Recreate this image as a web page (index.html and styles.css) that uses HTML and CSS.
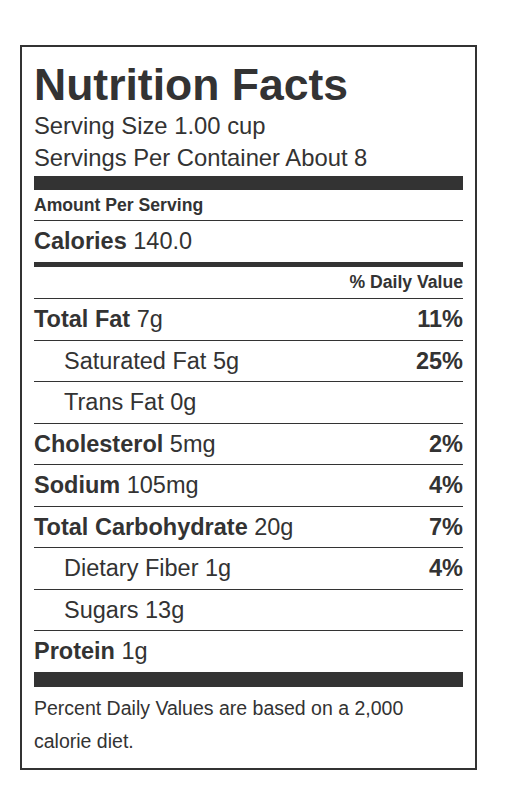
FILE: index.html
```html
<!DOCTYPE html>
<html lang="en">
<head>
    <meta charset="UTF-8">
    <meta name="viewport" content="width=device-width, initial-scale=1.0">
    <title>Nutrition Facts</title>
    <link rel="stylesheet" href="styles.css">
</head>
<body>
    <section class="label">
        <h1 class="title">Nutrition Facts</h1>
        <p class="serving">Serving Size 1.00 cup</p>
        <p class="serving">Servings Per Container About 8</p>
        <div class="bar bar-lg"></div>

        <div class="row row-small">
            <b>Amount Per Serving</b>
        </div>
        <div class="row row-cal">
            <span><b>Calories</b> 140.0</span>
        </div>
        <div class="bar bar-md"></div>
        <div class="row row-small row-dv">
            <b>% Daily Value</b>
        </div>

        <ul class="facts">
            <li class="row">
                <span><b>Total Fat</b> 7g</span>
                <b>11%</b>
            </li>
            <li class="row sub">
                <span>Saturated Fat 5g</span>
                <b>25%</b>
            </li>
            <li class="row sub">
                <span>Trans Fat 0g</span>
            </li>
            <li class="row">
                <span><b>Cholesterol</b> 5mg</span>
                <b>2%</b>
            </li>
            <li class="row">
                <span><b>Sodium</b> 105mg</span>
                <b>4%</b>
            </li>
            <li class="row">
                <span><b>Total Carbohydrate</b> 20g</span>
                <b>7%</b>
            </li>
            <li class="row sub">
                <span>Dietary Fiber 1g</span>
                <b>4%</b>
            </li>
            <li class="row sub">
                <span>Sugars 13g</span>
            </li>
            <li class="row last">
                <span><b>Protein</b> 1g</span>
            </li>
        </ul>
        <div class="bar bar-lg"></div>

        <p class="note">Percent Daily Values are based on a 2,000 calorie diet.</p>
    </section>
</body>
</html>
```

FILE: styles.css
```css
body {
    margin: 0;
    background: #fff;
    color: #333;
    font-family: "Liberation Sans", Arial, sans-serif;
}

.label {
    width: 457px;
    box-sizing: border-box;
    margin: 45px 0 0 20px;
    padding: 16px 12px 10px;
    border: 2px solid #333;
}

.title {
    margin: 0;
    font-size: 44.5px;
    line-height: 44px;
    font-weight: bold;
}

.serving {
    margin: 0;
    font-size: 23.8px;
    line-height: 32px;
}

.serving:first-of-type {
    margin-top: 3px;
}

.bar {
    background-color: #333;
}

.bar-lg {
    height: 15px;
}

.serving + .bar {
    margin-top: 2px;
    height: 14px;
}

.bar-md {
    height: 5px;
}

.row {
    display: flex;
    justify-content: space-between;
    font-size: 23.5px;
    line-height: 40.5px;
    border-bottom: 1px solid #333;
}

.row b {
    font-weight: bold;
}

.row-small {
    font-size: 17.6px;
    line-height: 30px;
}

.row-cal {
    line-height: 41px;
    border-bottom: none;
}

.row-dv {
    justify-content: flex-end;
    line-height: 31px;
}

.facts {
    list-style: none;
    margin: 0;
    padding: 0;
}

.sub {
    padding-left: 30px;
}

.last {
    border-bottom: none;
}

.note {
    max-width: 400px;
    margin: 5px 0 0;
    font-size: 19.5px;
    line-height: 33px;
}
```
